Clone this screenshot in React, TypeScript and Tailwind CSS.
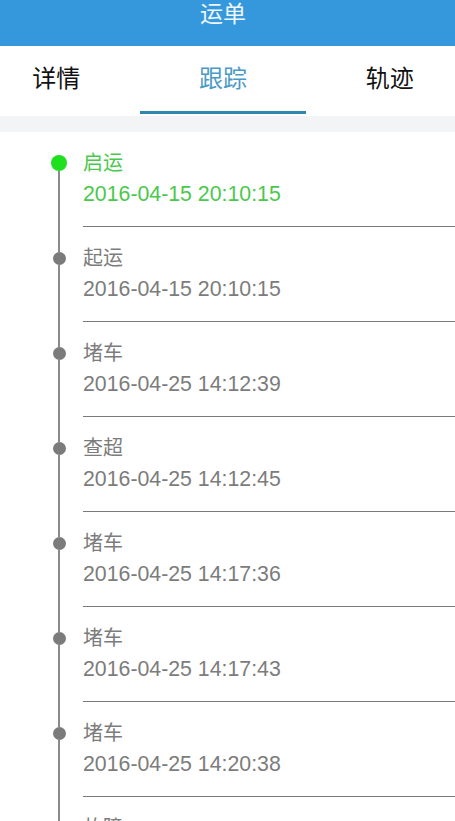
import { ChevronLeft } from "lucide-react";

type Track = {
  status: string;
  time: string;
};

const tracks: Track[] = [
  { status: "启运", time: "2016-04-15 20:10:15" },
  { status: "起运", time: "2016-04-15 20:10:15" },
  { status: "堵车", time: "2016-04-25 14:12:39" },
  { status: "查超", time: "2016-04-25 14:12:45" },
  { status: "堵车", time: "2016-04-25 14:17:36" },
  { status: "堵车", time: "2016-04-25 14:17:43" },
  { status: "堵车", time: "2016-04-25 14:20:38" },
  { status: "故障", time: "2016-04-25 14:25:02" },
];

const tabs = ["详情", "跟踪", "轨迹"];

function TrackRow({ item, first }: { item: Track; first: boolean }) {
  return (
    <div className="flex">
      <div className="w-[83px] shrink-0">
        <div className="ml-[51px] flex h-full w-[16px] flex-col items-center">
          {first ? (
            <>
              <div className="h-[23px] w-[2px]" />
              <div className="h-[16px] w-[16px] rounded-full bg-[#1ee01e]" />
            </>
          ) : (
            <>
              <div className="h-[25px] w-[2px] bg-[#8a8a8a]" />
              <div className="h-[13px] w-[13px] rounded-full bg-[#7b7b7b]" />
            </>
          )}
          <div className="w-[2px] flex-1 bg-[#8a8a8a]" />
        </div>
      </div>
      <div className="flex-1 border-b border-[#7a7a7a] pt-[19px] pb-[19px]">
        <div
          className={
            first
              ? "text-[20px] leading-[24px] text-[#4ac84c]"
              : "text-[20px] leading-[24px] text-[#7c7c7c]"
          }
        >
          {item.status}
        </div>
        <div
          className={
            first
              ? "mt-[6px] text-[21.3px] leading-[26px] text-[#4ac84c]"
              : "mt-[6px] text-[21.3px] leading-[26px] text-[#7c7c7c]"
          }
        >
          {item.time}
        </div>
      </div>
    </div>
  );
}

function App() {
  return (
    <div
      className="h-[821px] w-[455px] overflow-hidden bg-white"
      style={{ fontFamily: '"Liberation Sans", "Noto Sans CJK SC", sans-serif' }}
    >
      <div className="-ml-[27px] w-[500px]">
        <header className="relative h-[46px] bg-[#3598dc] text-center text-[23px] leading-[28px] text-[#eef6fc]">
          <ChevronLeft
            className="absolute left-[6px] top-[10px] text-white"
            size={26}
            strokeWidth={2.5}
          />
          <span className="inline-block">运单</span>
        </header>
        <nav className="flex h-[68px] bg-white">
          {tabs.map((tab, i) => (
            <div key={tab} className="flex flex-1 flex-col items-center justify-end">
              <span
                className={
                  i === 1
                    ? "pb-[17px] text-[24px] leading-[30px] text-[#4a9ac6]"
                    : "pb-[17px] text-[24px] leading-[30px] text-[#111111]"
                }
              >
                {tab}
              </span>
              <div
                className={
                  i === 1
                    ? "h-[3px] w-full bg-[#2f88ab]"
                    : "h-[3px] w-full bg-transparent"
                }
              />
            </div>
          ))}
        </nav>
      </div>
      <div className="h-[2px] bg-white" />
      <div className="h-[16px] bg-[#f2f4f5]" />
      <div className="bg-white">
        {tracks.map((t, i) => (
          <TrackRow key={i} item={t} first={i === 0} />
        ))}
      </div>
    </div>
  );
}

export default App;
